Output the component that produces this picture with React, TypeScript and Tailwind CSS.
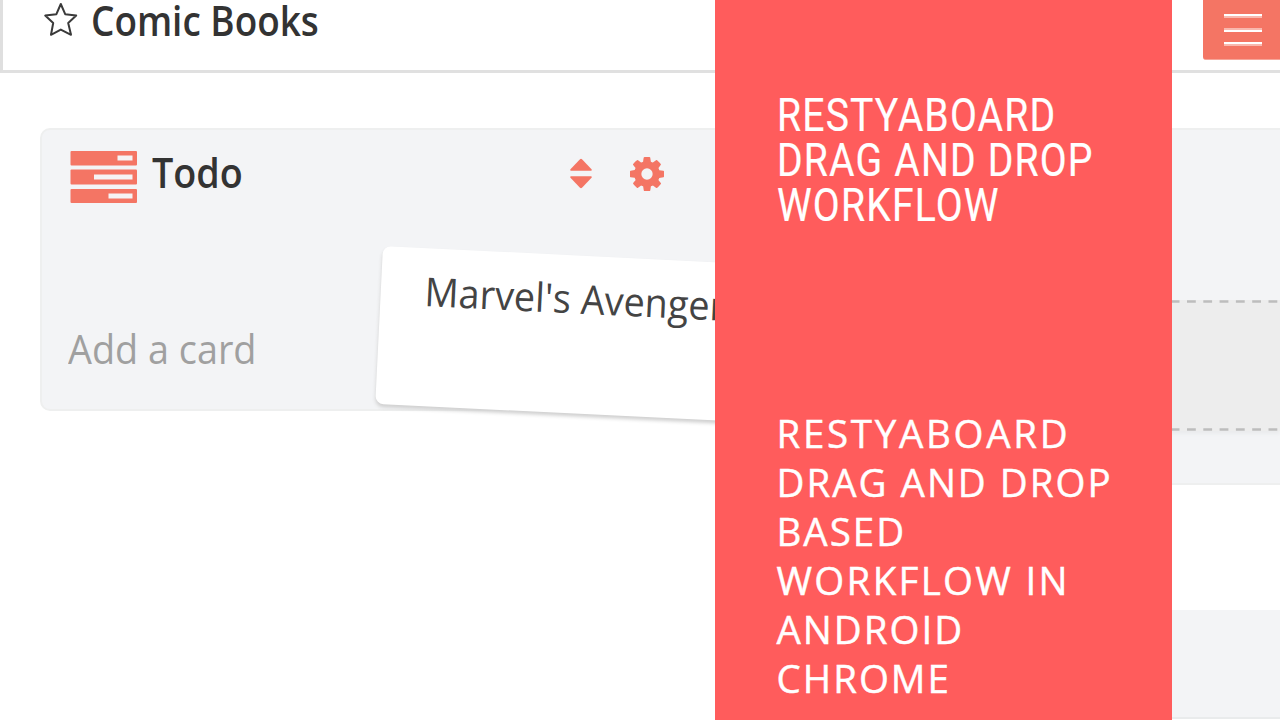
const GEAR =
  "M1024 896q0-106-75-181t-181-75-181 75-75 181 75 181 181 75 181-75 75-181zm512-109v222q0 12-8 23t-20 13l-185 28q-19 54-39 91 35 50 107 138 10 12 10 25t-9 23q-27 37-99 108t-94 71q-12 0-26-9l-138-108q-44 23-91 38-16 136-29 186-7 28-36 28h-222q-14 0-24.5-8.5t-11.5-21.5l-28-184q-49-16-90-37l-141 107q-10 9-25 9-14 0-25-11-126-114-165-168-7-10-7-23 0-12 8-23 15-21 51-66.5t54-70.5q-27-50-41-99l-183-27q-13-2-21-12.5t-8-23.5v-222q0-12 8-23t19-13l186-28q14-46 39-92-40-57-107-138-10-12-10-24 0-10 9-23 26-36 98.5-107.5t94.5-71.5q13 0 26 10l138 107q44-23 91-38 16-136 29-186 7-28 36-28h222q14 0 24.5 8.5t11.5 21.5l28 184q49 16 90 37l142-107q9-9 24-9 13 0 25 10 129 119 165 170 7 8 7 22 0 12-8 23-15 21-51 66.5t-54 70.5q26 50 41 98l183 28q13 2 21 12.5t8 23.5z";

function StarIcon() {
  return (
    <svg width="36" height="36" viewBox="0 0 36 36" className="mt-[1px] shrink-0">
      <path
        d="M17.8 3L22.2 13.2L33.2 14.6L25.2 22L28 33.8L17.8 28.6L8 33.8L10.2 22L2.2 14.6L13.4 13.2Z"
        fill="none"
        stroke="#3a3a3a"
        strokeWidth="2"
        strokeLinejoin="round"
      />
    </svg>
  );
}

function TasksIcon() {
  return (
    <svg width="67" height="53" viewBox="0 0 67 53" fill="#f47564" className="mt-[2px] shrink-0">
      <rect x="0.5" y="0" width="66.5" height="14.5" rx="1" />
      <rect x="0.5" y="18.5" width="66.5" height="15" rx="1" />
      <rect x="0.5" y="38" width="66.5" height="14" rx="1" />
      <g fill="#f6f3f4">
        <rect x="47.5" y="4.5" width="15" height="5" />
        <rect x="24" y="23.5" width="38.5" height="5" />
        <rect x="38.5" y="42.5" width="24" height="5" />
      </g>
    </svg>
  );
}

function SortIcon() {
  return (
    <svg width="22" height="32" viewBox="0 0 22 32" fill="#f47564">
      <path d="M1 12.7Q-.4 12.3.7 11L10 1.2Q11 .3 12 1.2L21.3 11Q22.4 12.3 21 12.7Z" />
      <path d="M1 18.3Q-.4 18.7.7 20L10 29.8Q11 30.7 12 29.8L21.3 20Q22.4 18.7 21 18.3Z" />
    </svg>
  );
}

function Header() {
  return (
    <header className="flex h-[73px] items-start justify-between border-b-[3px] border-l-[3px] border-b-[#e0e0e0] border-l-[#dfdfdf] pl-[40px]">
      <div className="flex items-start">
        <StarIcon />
        <h1 className="ml-[11.5px] origin-left scale-x-[0.9] whitespace-nowrap text-[41px] font-semibold leading-[41px] text-[#333]">
          Comic Books
        </h1>
      </div>
      <button className="flex h-[60px] w-[77.5px] flex-col items-start gap-[10px] rounded-bl-[3px] border-b border-[#f6a599] bg-[#f47564] pl-[21.5px] pt-[14px]">
        <span className="h-[4px] w-[38px] border-b-2 border-[#f9b8ae] bg-white" />
        <span className="h-[4px] w-[38px] border-t-2 border-[#f9b8ae] bg-white" />
        <span className="h-[4px] w-[38px] border-b-2 border-[#f9b8ae] bg-white" />
      </button>
    </header>
  );
}

function TodoList() {
  return (
    <section className="h-[283px] w-[700px] rounded-[10px] border-2 border-[#eeefef] bg-[#f3f4f6] pl-[28px] pt-[18px]">
      <div className="flex h-[56px] items-center">
        <TasksIcon />
        <h2 className="-mt-[9px] ml-[15px] w-[100px] origin-left scale-x-[0.92] text-[41px] font-semibold leading-[50px] text-[#333]">
          Todo
        </h2>
        <div className="-mt-[4px] ml-[318px] flex items-center gap-[37.5px]">
          <SortIcon />
          <svg width="34" height="34" viewBox="0 128 1536 1536" fill="#f47564">
            <path d={GEAR} />
          </svg>
        </div>
      </div>
      <p className="-ml-[2px] mt-[118px] w-max origin-left scale-x-[0.945] whitespace-nowrap text-[40px] leading-[54px] text-[#a0a0a0]">
        Add a card
      </p>
    </section>
  );
}

function Dashes() {
  return (
    <svg width="180" height="3" className="block">
      <line x1="5.5" y1="1.5" x2="180" y2="1.5" stroke="#bdbdbd" strokeWidth="2.4" strokeDasharray="8.8 7.5" />
    </svg>
  );
}

function Banner() {
  return (
    <aside className="absolute left-[715px] top-0 h-[720px] w-[457px] bg-[#ff5c5c] pl-[62px] text-white">
      <h2 className="-ml-[0.5px] w-max origin-left scale-x-[0.832] whitespace-nowrap pt-[92px] font-['Roboto'] text-[47px] leading-[45px] tracking-[1.4px] [-webkit-text-stroke:0.2px_white]">
        RESTYABOARD
        <br />
        DRAG AND DROP
        <br />
        WORKFLOW
      </h2>
      <p className="-ml-[0.5px] mt-[182px] text-[38.5px] leading-[49px] tracking-[2px] [-webkit-text-stroke:0.45px_white]">
        <span className="block whitespace-nowrap tracking-[2.7px]">RESTYABOARD</span>
        <span className="block whitespace-nowrap">DRAG AND DROP</span>
        <span className="block whitespace-nowrap">BASED</span>
        <span className="block whitespace-nowrap tracking-[2.3px]">WORKFLOW IN</span>
        <span className="block whitespace-nowrap">ANDROID</span>
        <span className="block whitespace-nowrap">CHROME</span>
      </p>
    </aside>
  );
}

export default function App() {
  return (
    <div className="relative h-[720px] w-[1280px] overflow-hidden bg-white font-['Open_Sans','Noto_Sans',sans-serif]">
      <Header />
      <main className="flex justify-between pl-[40px] pt-[55px]">
        <TodoList />
        <div className="flex w-[180px] flex-col gap-[125px]">
          <section className="h-[357px] border-y-2 border-[#eeefef] bg-[#f3f4f6] pt-[170px]">
            <div className="flex h-[131px] flex-col justify-between bg-[#ededed] shadow-[0_3px_3px_#ebecee]">
              <Dashes />
              <Dashes />
            </div>
          </section>
          <section className="h-[109px] border-b-2 border-[#e9ebec] bg-[#f3f4f6]" />
        </div>
      </main>
      <div className="absolute left-[383px] top-[246px] h-[158px] w-[500px] origin-top-left rotate-[2.8deg] rounded-[8px] bg-white pl-[43.5px] pt-[16px] shadow-[0_3px_4px_#d0d0d0]">
        <p className="w-max origin-left scale-x-[0.945] whitespace-nowrap text-[40px] leading-[54px] text-[#444]">
          Marvel's Avengers
        </p>
      </div>
      <Banner />
    </div>
  );
}
